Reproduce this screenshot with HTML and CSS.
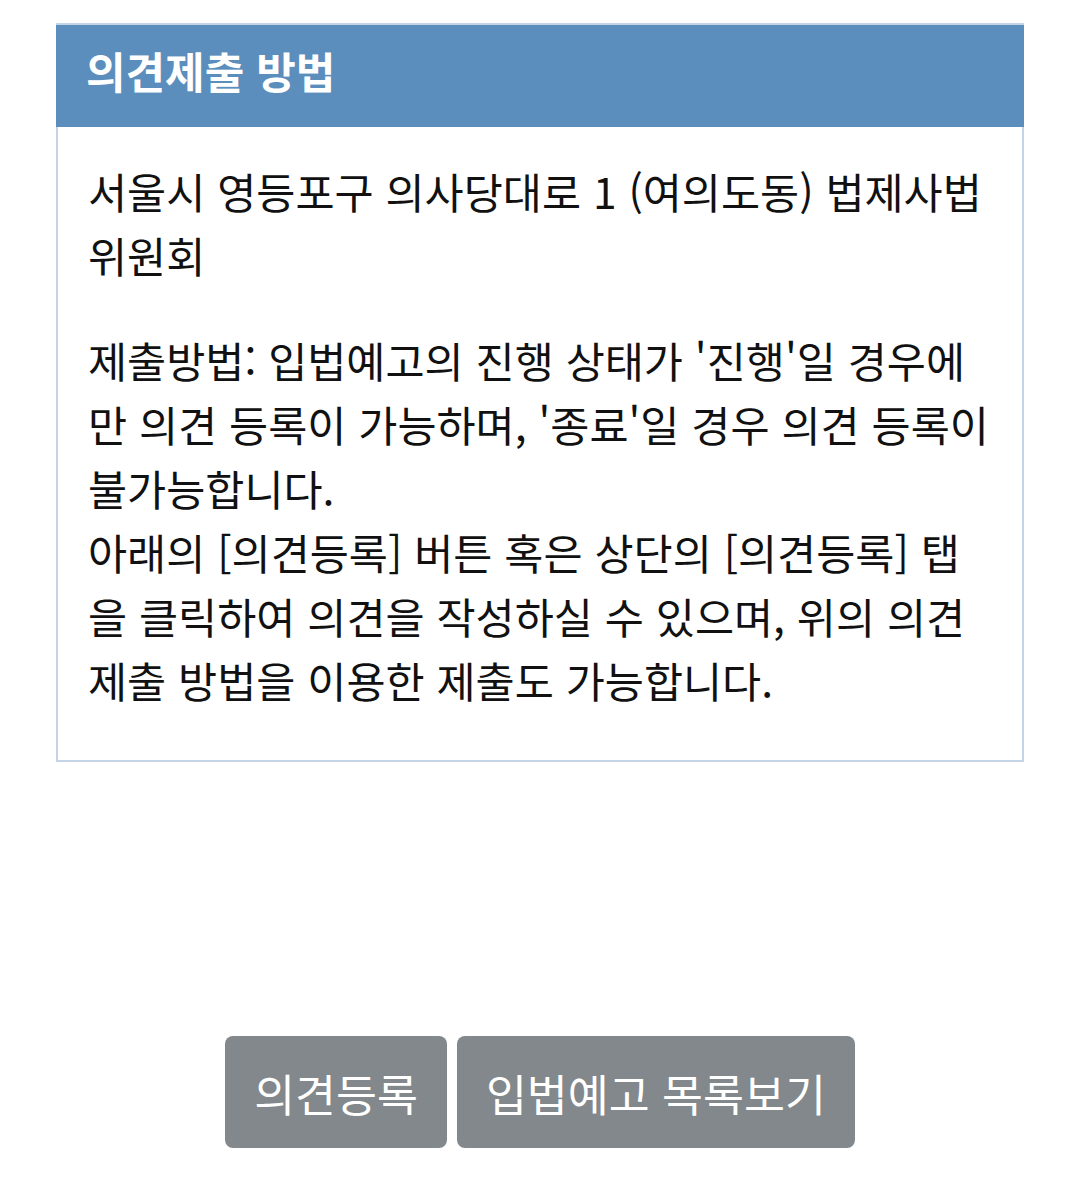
FILE: index.html
```html
<!DOCTYPE html>
<html lang="ko">

<head>
    <meta charset="UTF-8">
    <meta name="viewport" content="width=device-width, initial-scale=1.0">
    <title>의견제출 방법</title>
    <link rel="stylesheet" href="styles.css">
</head>

<body>
    <div class="opinion-box">
        <div class="opinion-title">의견제출 방법</div>
        <div class="opinion-body">
            <p>서울시 영등포구 의사당대로 1 (여의도동) 법제사법위원회</p>
            <p>제출방법: 입법예고의 진행 상태가 '진행'일 경우에만 의견 등록이 가능하며, '종료'일 경우 의견 등록이 불가능합니다.<br>
                아래의 [의견등록] 버튼 혹은 상단의 [의견등록] 탭을 클릭하여 의견을 작성하실 수 있으며, 위의 의견제출 방법을 이용한 제출도 가능합니다.</p>
        </div>
    </div>

    <div class="btn-area">
        <button class="btn">의견등록</button>
        <button class="btn">입법예고 목록보기</button>
    </div>
</body>

</html>
```

FILE: styles.css
```css
body {
    margin: 0;
    padding: 23px 56px 0 56px;
    font-family: "Noto Sans CJK KR", "Noto Sans", sans-serif;
    background-color: #fff;
    color: #111;
}

.opinion-box {
    border: 2px solid #c3d5e6;
    border-top: 0;
}

.opinion-title {
    background-color: #5b8dbd;
    color: #fff;
    font-size: 43px;
    font-weight: bold;
    height: 104px;
    line-height: 90px;
    padding: 0 30px;
    margin: 0 -2px;
    border-top: 2px solid #c3d5e6;
    box-sizing: border-box;
}

.opinion-body {
    padding: 32px 30px 48px 30px;
}

.opinion-body p {
    font-size: 42.5px;
    line-height: 64px;
    margin: 0 0 41px 0;
    word-break: break-all;
}

.opinion-body p:last-child {
    margin-bottom: 0;
}

.btn-area {
    display: flex;
    justify-content: center;
    gap: 10px;
    margin-top: 274px;
}

.btn {
    font-family: inherit;
    font-size: 44.5px;
    color: #fff;
    background-color: #82888b;
    border: none;
    border-radius: 8px;
    height: 112px;
    padding: 0 29px;
}
```
